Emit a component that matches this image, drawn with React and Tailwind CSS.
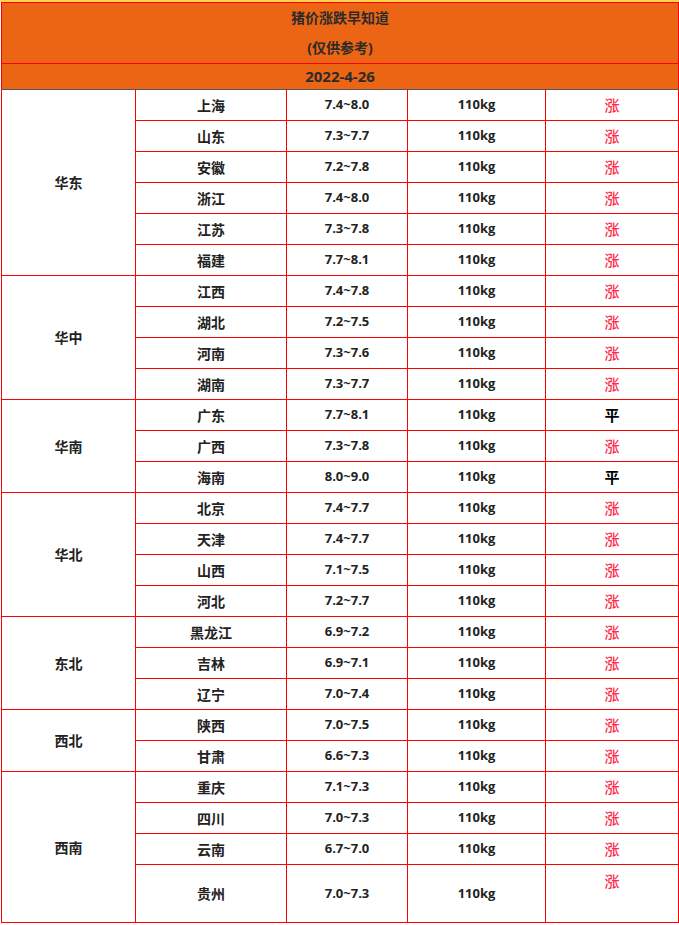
const groups = [
  { region: '华东', rows: [['上海', '7.4~8.0', '涨'], ['山东', '7.3~7.7', '涨'], ['安徽', '7.2~7.8', '涨'], ['浙江', '7.4~8.0', '涨'], ['江苏', '7.3~7.8', '涨'], ['福建', '7.7~8.1', '涨']] },
  { region: '华中', rows: [['江西', '7.4~7.8', '涨'], ['湖北', '7.2~7.5', '涨'], ['河南', '7.3~7.6', '涨'], ['湖南', '7.3~7.7', '涨']] },
  { region: '华南', rows: [['广东', '7.7~8.1', '平'], ['广西', '7.3~7.8', '涨'], ['海南', '8.0~9.0', '平']] },
  { region: '华北', rows: [['北京', '7.4~7.7', '涨'], ['天津', '7.4~7.7', '涨'], ['山西', '7.1~7.5', '涨'], ['河北', '7.2~7.7', '涨']] },
  { region: '东北', rows: [['黑龙江', '6.9~7.2', '涨'], ['吉林', '6.9~7.1', '涨'], ['辽宁', '7.0~7.4', '涨']] },
  { region: '西北', rows: [['陕西', '7.0~7.5', '涨'], ['甘肃', '6.6~7.3', '涨']] },
  { region: '西南', rows: [['重庆', '7.1~7.3', '涨'], ['四川', '7.0~7.3', '涨'], ['云南', '6.7~7.0', '涨'], ['贵州', '7.0~7.3', '涨']] },
];

const cell = 'border border-[#ff0000] text-center p-0';

export default function App() {
  return (
    <div className="w-[679px] h-[925px] bg-white border-t-2 border-[#ffd24a] font-['Open_Sans','Noto_Sans_CJK_SC',sans-serif] text-[#222]">
      <table className="w-[677px] ml-[1px] border-collapse table-fixed">
        <colgroup>
          <col className="w-[134px]" />
          <col className="w-[151px]" />
          <col className="w-[121px]" />
          <col className="w-[138px]" />
          <col className="w-[133px]" />
        </colgroup>
        <thead>
          <tr className="h-[61px] bg-[#ec6514]">
            <td colSpan={5} className={cell + ' text-[14px] font-bold leading-[30px] text-[#2b2b2b]'}>
              <div>猪价涨跌早知道</div>
              <div>(仅供参考)</div>
            </td>
          </tr>
          <tr className="h-[26px] bg-[#ec6514]">
            <td colSpan={5} className={cell + ' border-b-[#555] text-[15px] font-bold text-[#2b2b2b]'}>2022-4-26</td>
          </tr>
        </thead>
        <tbody>
          {groups.map(g =>
            g.rows.map((r, i) => {
              const last = r[0] === '贵州';
              return (
                <tr key={r[0]} className={last ? 'h-[58px]' : 'h-[31px]'}>
                  {i === 0 && <td rowSpan={g.rows.length} className={cell + ' text-[14px] font-bold'}>{g.region}</td>}
                  <td className={cell + ' text-[14px] font-bold'}>{r[0]}</td>
                  <td className={cell + ' text-[13px] font-bold'}>{r[1]}</td>
                  <td className={cell + ' text-[13px] font-bold'}>110kg</td>
                  <td className={cell + ' text-[15px] ' + (last ? 'align-top pt-[5px] ' : '') + (r[2] === '涨' ? 'text-[#ff2a4a] font-medium' : 'text-black font-bold')}>{r[2]}</td>
                </tr>
              );
            })
          )}
        </tbody>
      </table>
    </div>
  );
}
